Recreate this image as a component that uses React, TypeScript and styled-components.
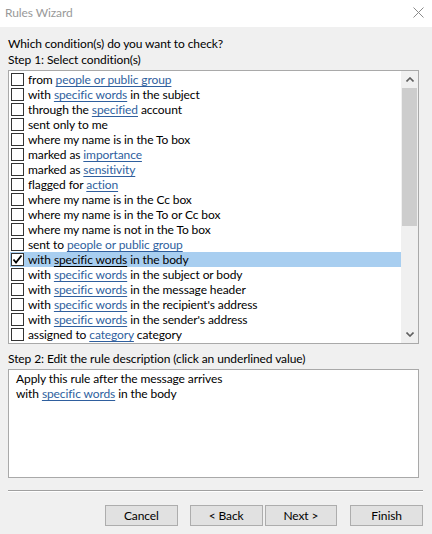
import React from 'react'
import styled, { createGlobalStyle } from 'styled-components'

const GlobalStyle = createGlobalStyle`
  html, body {
    margin: 0;
    padding: 0;
    background: #f0f0f0;
  }
  body {
    font-family: Lato, 'Liberation Sans', Arial, sans-serif;
    font-size: 12px;
    letter-spacing: -0.1px;
    color: #000;
  }
`

type Part = string | { link: string }

interface Condition {
  parts: Part[]
  checked?: boolean
}

const conditions: Condition[] = [
  { parts: ['from ', { link: 'people or public group' }] },
  { parts: ['with ', { link: 'specific words' }, ' in the subject'] },
  { parts: ['through the ', { link: 'specified' }, ' account'] },
  { parts: ['sent only to me'] },
  { parts: ['where my name is in the To box'] },
  { parts: ['marked as ', { link: 'importance' }] },
  { parts: ['marked as ', { link: 'sensitivity' }] },
  { parts: ['flagged for ', { link: 'action' }] },
  { parts: ['where my name is in the Cc box'] },
  { parts: ['where my name is in the To or Cc box'] },
  { parts: ['where my name is not in the To box'] },
  { parts: ['sent to ', { link: 'people or public group' }] },
  { parts: ['with ', { link: 'specific words' }, ' in the body'], checked: true },
  { parts: ['with ', { link: 'specific words' }, ' in the subject or body'] },
  { parts: ['with ', { link: 'specific words' }, ' in the message header'] },
  { parts: ['with ', { link: 'specific words' }, " in the recipient's address"] },
  { parts: ['with ', { link: 'specific words' }, " in the sender's address"] },
  { parts: ['assigned to ', { link: 'category' }, ' category'] },
]

const Window = styled.div`
  width: 432px;
  height: 534px;
  display: flex;
  flex-direction: column;
  background: #f0f0f0;
  overflow: hidden;
`

const TitleBar = styled.div`
  height: 27px;
  background: #fff;
  display: flex;
  align-items: center;
  justify-content: space-between;
  padding: 0 8px 3px 5px;
  box-sizing: border-box;
`

const Title = styled.span`
  color: #999;
  font-size: 12px;
`

const Body = styled.div`
  display: flex;
  flex-direction: column;
  padding: 9px 9px 0 8px;
`

const Label = styled.div`
  height: 15px;
  line-height: 16px;
  white-space: nowrap;
`

const Question = styled(Label)`
  margin-bottom: 1px;
`

const ListBox = styled.div`
  margin-top: 3px;
  width: 411px;
  height: 274px;
  box-sizing: border-box;
  border: 1px solid #a9a9a9;
  background: #fff;
  display: flex;
`

const Rows = styled.div`
  flex: 1;
  padding: 1px 0 0 1px;
  display: flex;
  flex-direction: column;
`

const Row = styled.div<{ $selected?: boolean }>`
  height: 15px;
  display: flex;
  align-items: center;
  background: ${({ $selected }) => ($selected ? '#a8cef0' : 'transparent')};
  white-space: nowrap;
`

const Box = styled.span`
  width: 13px;
  height: 13px;
  margin-left: 1px;
  margin-right: 4px;
  box-sizing: border-box;
  border: 1px solid #333;
  background: #fff;
  display: flex;
  align-items: center;
  justify-content: center;
  flex-shrink: 0;
`

const RowText = styled.span`
  line-height: 15px;
`

const Link = styled.span<{ $plain?: boolean }>`
  color: ${({ $plain }) => ($plain ? '#000' : '#2f5f9e')};
  text-decoration: underline;
  text-underline-offset: 2px;
`

const ScrollBar = styled.div`
  width: 17px;
  background: #f0f0f0;
  display: flex;
  flex-direction: column;
`

const Arrow = styled.div`
  height: 17px;
  display: flex;
  align-items: center;
  justify-content: center;
  flex-shrink: 0;
`

const Thumb = styled.div`
  height: 138px;
  margin: 0 1px;
  background: #cdcdcd;
`

const Track = styled.div`
  flex: 1;
`

const StepTwo = styled(Label)`
  margin-top: 7px;
`

const Description = styled.div`
  margin-top: 3px;
  width: 411px;
  height: 109px;
  box-sizing: border-box;
  border: 1px solid #a9a9a9;
  background: #fff;
  padding: 1px 7px;
`

const Separator = styled.div`
  margin-top: 12px;
  width: 415px;
  height: 1px;
  background: #a0a0a0;
  border-bottom: 1px solid #fff;
`

const Buttons = styled.div`
  margin-top: 13px;
  display: flex;
  padding-left: 97px;
`

const Button = styled.button<{ $gap?: number }>`
  width: 73px;
  height: 21px;
  margin-left: ${({ $gap }) => $gap ?? 0}px;
  box-sizing: border-box;
  border: 1px solid #adadad;
  background: #e1e1e1;
  font-family: inherit;
  font-size: 12px;
  letter-spacing: inherit;
  color: #000;
  padding: 0 0 1px;
`

const Check = () => (
  <svg width="11" height="11" viewBox="0 0 11 11">
    <path d="M1.5 5.5 L4 8.5 L9.5 1.5" fill="none" stroke="#000" strokeWidth="1.8" />
  </svg>
)

const Chevron = ({ down }: { down?: boolean }) => (
  <svg width="8" height="5" viewBox="0 0 8 5">
    <path
      d={down ? 'M0.5 0.5 L4 4 L7.5 0.5' : 'M0.5 4.5 L4 1 L7.5 4.5'}
      fill="none"
      stroke="#606060"
      strokeWidth="1.6"
    />
  </svg>
)

const CloseIcon = () => (
  <svg width="11" height="11" viewBox="0 0 11 11">
    <path d="M0.5 0.5 L10.5 10.5 M10.5 0.5 L0.5 10.5" stroke="#8a8a8a" strokeWidth="1" />
  </svg>
)

const renderParts = (parts: Part[], selected?: boolean) =>
  parts.map((p, i) =>
    typeof p === 'string' ? (
      <React.Fragment key={i}>{p}</React.Fragment>
    ) : (
      <Link key={i} $plain={selected}>
        {p.link}
      </Link>
    ),
  )

export default function App() {
  return (
    <>
      <GlobalStyle />
      <Window>
        <TitleBar>
          <Title>Rules Wizard</Title>
          <CloseIcon />
        </TitleBar>
        <Body>
          <Question>Which condition(s) do you want to check?</Question>
          <Label>Step 1: Select condition(s)</Label>
          <ListBox>
            <Rows>
              {conditions.map((c, i) => (
                <Row key={i} $selected={c.checked}>
                  <Box>{c.checked && <Check />}</Box>
                  <RowText>{renderParts(c.parts, c.checked)}</RowText>
                </Row>
              ))}
            </Rows>
            <ScrollBar>
              <Arrow>
                <Chevron />
              </Arrow>
              <Thumb />
              <Track />
              <Arrow>
                <Chevron down />
              </Arrow>
            </ScrollBar>
          </ListBox>
          <StepTwo>Step 2: Edit the rule description (click an underlined value)</StepTwo>
          <Description>
            <Label>Apply this rule after the message arrives</Label>
            <Label>
              with <Link>specific words</Link> in the body
            </Label>
          </Description>
          <Separator />
          <Buttons>
            <Button>Cancel</Button>
            <Button $gap={12}>&lt; Back</Button>
            <Button $gap={2}>Next &gt;</Button>
            <Button $gap={13}>Finish</Button>
          </Buttons>
        </Body>
      </Window>
    </>
  )
}
